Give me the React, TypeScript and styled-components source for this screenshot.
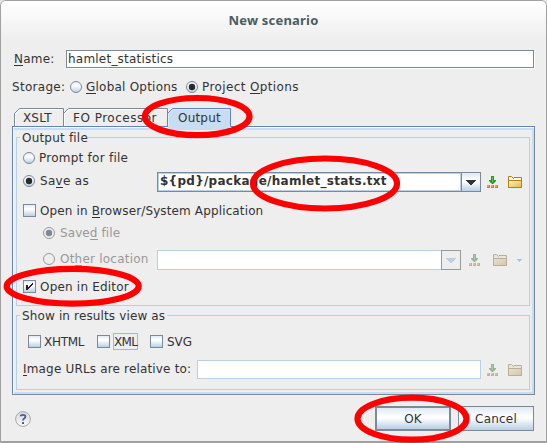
import React, { ReactNode } from "react";
import styled, { createGlobalStyle, css } from "styled-components";

const STEEL = "#7a8a99";
const SKY = "#b8cfe5";
const FACE = "linear-gradient(#dfe9f4 0%, #ffffff 42%, #ffffff 48%, #b8cfe5 100%)";

const GlobalStyle = createGlobalStyle`
  * { box-sizing: border-box; }
  body { margin: 0; background: #e4e4e4; }
`;

const Screen = styled.div`
  position: relative;
  width: 547px;
  height: 443px;
  overflow: hidden;
`;

const Window = styled.div`
  height: 443px;
  padding: 0 12px 0 11px;
  border: 1px solid #a0a0a0;
  border-radius: 6px 6px 0 0;
  background: #eeeeee;
  box-shadow: inset 0 -1px 0 #a0a0a0;
  font: 12px/16px "DejaVu Sans", sans-serif;
  color: #333333;
  overflow: hidden;
`;

const TitleBar = styled.header`
  display: flex;
  justify-content: center;
  height: 39px;
  margin: 0 -12px 0 -11px;
  padding-top: 9px;
  background: linear-gradient(#ffffff, #eeeeee);
  font: bold 13px/20px "Noto Sans", sans-serif;
  letter-spacing: 0.2px;
  color: #4b5c63;
`;

const Row = styled.div<{ $h: number; $top?: number; $left?: number }>`
  display: flex;
  align-items: center;
  height: ${(p) => p.$h}px;
  margin-top: ${(p) => p.$top ?? 0}px;
  padding-left: ${(p) => p.$left ?? 0}px;
`;

const Text = styled.span<{ $ls?: number; $w?: number; $gap?: number; $off?: boolean }>`
  flex: none;
  white-space: pre;
  letter-spacing: ${(p) => p.$ls ?? 0}px;
  margin-left: ${(p) => p.$gap ?? 0}px;
  color: ${(p) => (p.$off ? "#999999" : "inherit")};
  ${(p) => p.$w && css`width: ${p.$w}px;`}
  u {
    text-decoration: none;
    box-shadow: 0 -1px 0 0 currentColor inset;
    display: inline-block;
    height: 15px;
    line-height: 16px;
    vertical-align: top;
  }
`;

const Field = styled.div<{ $w: number; $h: number; $off?: boolean }>`
  flex: none;
  display: flex;
  align-items: center;
  width: ${(p) => p.$w}px;
  height: ${(p) => p.$h}px;
  margin-bottom: ${(p) => (p.$off ? -1 : 0)}px;
  padding-left: 1px;
  border: 1px solid ${(p) => (p.$off ? SKY : STEEL)};
  background: #ffffff;
  box-shadow: ${(p) => (p.$off ? "none" : "1px 1px 0 #ffffff")};
`;

const Combo = styled.div<{ $w: number; $off?: boolean }>`
  flex: none;
  display: flex;
  width: ${(p) => p.$w}px;
  height: 20px;
  margin-bottom: -2px;
  border: 1px solid ${(p) => (p.$off ? SKY : STEEL)};
  background: #ffffff;
`;

const ComboValue = styled.div<{ $off?: boolean }>`
  flex: 1;
  display: flex;
  align-items: center;
  padding-bottom: 2px;
  padding-left: 1px;
  font-weight: bold;
  border: ${(p) => (p.$off ? "none" : `1px solid ${SKY}`)};
`;

const ComboButton = styled.div<{ $off?: boolean }>`
  display: flex;
  align-items: center;
  justify-content: center;
  width: 19px;
  border-left: 1px solid ${STEEL};
  background: ${FACE};
  ${(p) =>
    p.$off &&
    css`
      width: 20px;
      margin: -1px;
      border: 1px solid #999999;
      background: #eeeeee;
    `}
`;

const Check = styled.span<{ $gap?: number }>`
  flex: none;
  display: flex;
  width: 13px;
  height: 13px;
  margin-left: ${(p) => p.$gap ?? 0}px;
  border: 1px solid ${STEEL};
  background: linear-gradient(#dfe9f4, #ffffff 30%, #ffffff 40%, #b8cfe5);
`;

const FocusText = styled(Text)`
  margin: 0 0 0 3px;
  width: 25px;
  height: 17px;
  border: 1px solid #a3b8cc;
  line-height: 16px;
`;

const Tabs = styled.nav`
  display: flex;
  height: 18px;
  margin: 13px 0 0 2px;
`;

const Tab = styled.div<{ $w: number; $pad: number; $active?: boolean }>`
  position: relative;
  z-index: ${(p) => (p.$active ? 1 : 0)};
  width: ${(p) => p.$w}px;
  height: ${(p) => (p.$active ? 20 : 18)}px;
  padding: 2px 0 0 ${(p) => p.$pad}px;
  svg {
    position: absolute;
    left: 0;
    top: 0;
  }
  span {
    position: relative;
  }
`;

const Panel = styled.section`
  width: 523px;
  height: 269px;
  padding: 10px 4px 0 3px;
  border: 1px solid #6382bf;
  border-right-color: ${STEEL};
  border-bottom-color: ${STEEL};
  background: #eeeeee;
  box-shadow: inset 1px 1px 0 #ffffff, inset -2px -2px 0 #c8ddf2, inset 0 3px 0 #c8ddf2;
`;

const Group = styled.section<{ $h: number; $top: number }>`
  height: ${(p) => p.$h}px;
  margin: ${(p) => p.$top}px 0 0;
  border: 1px solid ${SKY};
`;

const Legend = styled.div<{ $w: number }>`
  width: ${(p) => p.$w}px;
  height: 16px;
  margin: -8px 0 0 3px;
  padding-left: 2px;
  background: #eeeeee;
`;

const Footer = styled.footer`
  display: flex;
  align-items: center;
  height: 25px;
  margin: 11px 0 0 3px;
`;

const Button = styled.button<{ $default?: boolean; $gap?: number; $ls?: number }>`
  width: 76px;
  height: 25px;
  margin: 0 0 0 ${(p) => p.$gap ?? 0}px;
  padding: 0;
  border: ${(p) => (p.$default ? 2 : 1)}px solid ${STEEL};
  background: ${FACE};
  font: 12px/16px "DejaVu Sans", sans-serif;
  letter-spacing: ${(p) => p.$ls ?? 0}px;
  color: #333333;
`;

const Icon = styled.svg<{ $gap?: number; $top?: number; $off?: boolean }>`
  flex: none;
  display: block;
  margin-left: ${(p) => p.$gap ?? 0}px;
  margin-top: ${(p) => p.$top ?? 0}px;
  opacity: ${(p) => (p.$off ? 0.5 : 1)};
  filter: ${(p) => (p.$off ? "saturate(0.6) brightness(0.88)" : "none")};
`;

const Rings = styled.svg`
  position: absolute;
  left: 0;
  top: 0;
  pointer-events: none;
`;

function Radio({ on, off }: { on?: boolean; off?: boolean }) {
  return (
    <Icon width="12" height="12" viewBox="0 0 12 12">
      <defs>
        <linearGradient id="radioFace" x1="0" y1="0" x2="0" y2="1">
          <stop offset="0" stopColor="#dfe9f4" />
          <stop offset="0.35" stopColor="#fff" />
          <stop offset="1" stopColor="#b8cfe5" />
        </linearGradient>
      </defs>
      <circle cx="6" cy="6" r="5.5" fill={off ? "#eeeeee" : "url(#radioFace)"} stroke={off ? "#999999" : STEEL} />
      {on && <circle cx="6" cy="6" r="3.2" fill={off ? STEEL : "#2b2b2b"} />}
    </Icon>
  );
}

function Arrow({ color }: { color: string }) {
  return (
    <svg width="10" height="5" viewBox="0 0 10 5" shapeRendering="crispEdges">
      <path d="M0 0H10V1H9V2H8V3H7V4H6V5H4V4H3V3H2V2H1V1H0Z" fill={color} />
    </svg>
  );
}

function InsertIcon({ off, gap }: { off?: boolean; gap?: number }) {
  return (
    <Icon width="11" height="12" viewBox="0 0 11 12" $gap={gap} $top={2} $off={off}>
      <path d="M4 0H7V4H9V5L6 8H5L2 5V4H4Z" fill="#219c1c" />
      <path d="M5 1H6V6H5Z" fill="#5cc552" />
      <path d="M0 9H3V12H0ZM4 9H7V12H4ZM8 9H11V12H8Z" fill="#cf7d14" />
      <path d="M0 9H2V11H0ZM4 9H6V11H4ZM8 9H10V11H8Z" fill="#eda43c" />
    </Icon>
  );
}

function FolderIcon({ off, gap }: { off?: boolean; gap?: number }) {
  return (
    <Icon width="14" height="12" viewBox="0 0 14 12" $gap={gap} $top={2} $off={off}>
      <defs>
        <linearGradient id="folderFace" x1="0" y1="0" x2="1" y2="1">
          <stop offset="0" stopColor="#fff3c0" />
          <stop offset="1" stopColor="#e8b84a" />
        </linearGradient>
      </defs>
      <path d="M0.5 11.5V0.5H3.5L5.5 2.5L6 1.5H13.5V11.5Z" fill="#fffbe6" stroke="#b87d0a" />
      <path d="M0.5 4.5H13.5V11.5H0.5Z" fill="url(#folderFace)" stroke="#b87d0a" />
    </Icon>
  );
}

function TabShape({ w, active }: { w: number; active?: boolean }) {
  const h = active ? 20 : 18;
  return (
    <svg width={w + 1} height={h} viewBox={`0 0 ${w + 1} ${h}`}>
      <path d={`M1 ${h}V5.5L5.5 0.5H${w + 0.5}V${h}Z`} fill={active ? "#c8ddf2" : "#eeeeee"} />
      <path d={`M0.5 18V5.5L5.5 0.5H${w + 0.5}V18`} fill="none" stroke={active ? "#6382bf" : STEEL} />
      <path d={`M1.5 18V6L6 1.5H${w - 0.5}`} fill="none" stroke={active ? "#dcebfa" : "#ffffff"} />
    </svg>
  );
}

function TabItem(p: { w: number; pad: number; ls: number; active?: boolean; children: ReactNode }) {
  return (
    <Tab $w={p.w} $pad={p.pad} $active={p.active}>
      <TabShape w={p.w} active={p.active} />
      <Text $ls={p.ls}>{p.children}</Text>
    </Tab>
  );
}

export default function App() {
  return (
    <Screen>
      <GlobalStyle />
      <Window>
        <TitleBar>New scenario</TitleBar>

        <Row $h={18} $top={10} $left={2}>
          <Text $ls={0.2} $w={52}><u>N</u>ame:</Text>
          <Field $w={468} $h={18}><Text $ls={0.22}>hamlet_statistics</Text></Field>
        </Row>

        <Row $h={16} $top={11}>
          <Text $ls={0.3} $w={58}>Storage:</Text>
          <Radio />
          <Text $gap={4} $w={100} $ls={0.22}><u>G</u>lobal Options</Text>
          <Radio on />
          <Text $gap={4} $ls={0.38}>Project <u>O</u>ptions</Text>
        </Row>

        <Tabs>
          <TabItem w={49} pad={9} ls={0.15}>XSLT</TabItem>
          <TabItem w={104} pad={10} ls={0.5}>FO Processor</TabItem>
          <TabItem w={63} pad={11} ls={0.2} active>Output</TabItem>
        </Tabs>

        <Panel>
          <Group $h={169} $top={0}>
            <Legend $w={68}><Text $ls={0.2}>Output file</Text></Legend>
            <Row $h={16} $top={4} $left={6}>
              <Radio />
              <Text $gap={4} $ls={0.25}>Prompt for file</Text>
            </Row>
            <Row $h={18} $top={6} $left={6}>
              <Radio on />
              <Text $gap={5} $w={117} $ls={0.3}>Sa<u>v</u>e as</Text>
              <Combo $w={324}>
                <ComboValue><Text $ls={0.27}>{"${pd}/package/hamlet_stats.txt"}</Text></ComboValue>
                <ComboButton><Arrow color="#333333" /></ComboButton>
              </Combo>
              <InsertIcon gap={6} />
              <FolderIcon gap={10} />
            </Row>
            <Row $h={17} $top={12} $left={6}>
              <Check />
              <Text $gap={4} $ls={0.13}>Open in <u>B</u>rowser/System Application</Text>
            </Row>
            <Row $h={16} $top={6} $left={26}>
              <Radio on off />
              <Text $off $gap={5} $ls={0.1}>Save<u>d</u> file</Text>
            </Row>
            <Row $h={18} $top={9} $left={26}>
              <Radio off />
              <Text $off $gap={5} $w={97} $ls={0.22}>Ot<u>h</u>er location</Text>
              <Combo $w={304} $off>
                <ComboValue $off />
                <ComboButton $off><Arrow color={SKY} /></ComboButton>
              </Combo>
              <InsertIcon off gap={8} />
              <FolderIcon off gap={13} />
              <Icon width="5" height="3" viewBox="0 0 5 3" $gap={10} $top={3} shapeRendering="crispEdges">
                <path d="M0 0H5V1H4V2H3V3H2V2H1V1H0Z" fill="#a9c6e3" />
              </Icon>
            </Row>
            <Row $h={17} $top={10} $left={6}>
              <Check>
                <svg width="11" height="11" viewBox="0 0 11 11" shapeRendering="crispEdges">
                  <path d="M2 4H4V6H5V5H6V4H7V3H8V2H9V4H8V5H7V6H6V7H5V8H4V9H2Z" fill="#222222" />
                </svg>
              </Check>
              <Text $gap={4} $ls={0.2}>Open in Editor</Text>
            </Row>
          </Group>

          <Group $h={75} $top={9}>
            <Legend $w={147}><Text $ls={0.14}>Show in results view as</Text></Legend>
            <Row $h={17} $top={9} $left={11}>
              <Check />
              <Text $gap={3} $w={53} $ls={-0.3}>XHTML</Text>
              <Check />
              <FocusText $ls={-0.6}>XML</FocusText>
              <Check $gap={12} />
              <Text $gap={4}>SVG</Text>
            </Row>
            <Row $h={18} $top={10} $left={6}>
              <Text $w={174} $ls={0.17}><u>I</u>mage URLs are relative to:</Text>
              <Field $w={284} $h={19} $off />
              <InsertIcon off gap={6} />
              <FolderIcon off gap={10} />
            </Row>
          </Group>
        </Panel>

        <Footer>
          <svg width="16" height="16" viewBox="0 0 16 16">
            <defs>
              <linearGradient id="helpFace" x1="0" y1="0" x2="0" y2="1">
                <stop offset="0" stopColor="#d8d8dc" />
                <stop offset="1" stopColor="#fafafa" />
              </linearGradient>
            </defs>
            <circle cx="8" cy="8" r="7.4" fill="url(#helpFace)" stroke="#a8a8a8" />
            <path d="M5.4 5.2Q5.8 3.9 8 3.9Q10.4 3.9 10.4 5.8Q10.4 7 9 7.7Q8 8.3 8 9.6" fill="none" stroke="#4a5a9c" strokeWidth="1.8" />
            <path d="M7 11H9V13H7Z" fill="#4a5a9c" />
          </svg>
          <Button $gap={344} $default>OK</Button>
          <Button $gap={7} $ls={0.2}>Cancel</Button>
        </Footer>
      </Window>

      <Rings width="547" height="443" viewBox="0 0 547 443" fill="none" stroke="#ff0000" strokeWidth="6.2">
        <ellipse cx="197.2" cy="116.6" rx="52.3" ry="18.6" />
        <ellipse cx="325" cy="183.5" rx="72" ry="25" />
        <ellipse cx="72.7" cy="286.3" rx="66" ry="17.4" />
        <ellipse cx="412" cy="418.7" rx="54.5" ry="21" />
      </Rings>
    </Screen>
  );
}
